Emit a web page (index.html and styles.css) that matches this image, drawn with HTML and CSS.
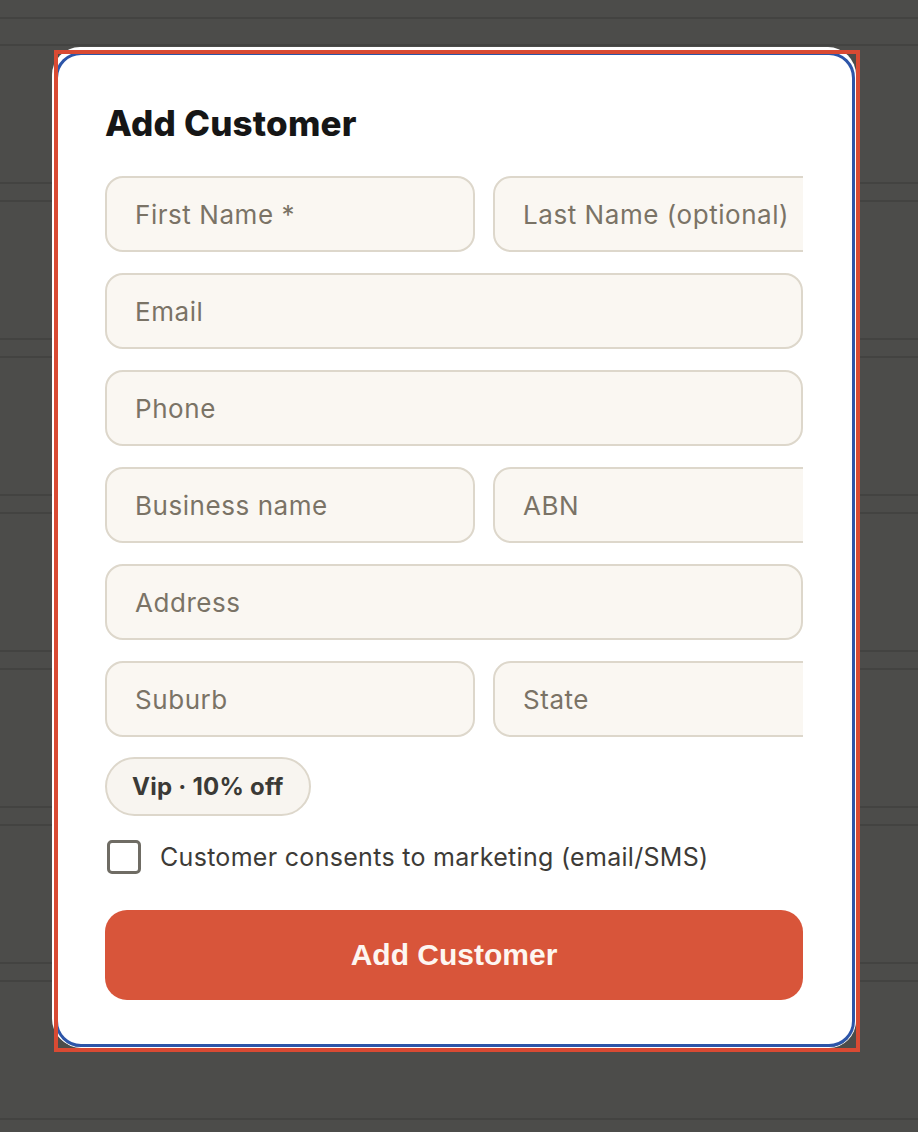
FILE: index.html
```html
<!DOCTYPE html>
<html lang="en">
<head>
<meta charset="utf-8">
<title>Add Customer</title>
<link rel="stylesheet" href="styles.css">
</head>
<body>
<div class="backdrop">
  <div class="bg-row top-a"></div>
  <div class="bg-row top-b"></div>
  <div class="bg-row tall"></div>
  <div class="bg-row band"></div>
  <div class="bg-row tall"></div>
  <div class="bg-row band"></div>
  <div class="bg-row tall"></div>
  <div class="bg-row band"></div>
  <div class="bg-row tall"></div>
  <div class="bg-row band"></div>
  <div class="bg-row tall"></div>
  <div class="bg-row band"></div>
  <div class="bg-row tall"></div>
  <div class="bg-row band"></div>
  <div class="bg-row tall"></div>
</div>

<div class="modal">
  <h1 class="title">Add Customer</h1>
  <form class="form">
    <div class="pair">
      <input class="field half" type="text" placeholder="First Name *">
      <input class="field half" type="text" placeholder="Last Name (optional)">
    </div>
    <input class="field" type="email" placeholder="Email">
    <input class="field" type="tel" placeholder="Phone">
    <div class="pair">
      <input class="field half" type="text" placeholder="Business name">
      <input class="field half" type="text" placeholder="ABN">
    </div>
    <input class="field" type="text" placeholder="Address">
    <div class="pair">
      <input class="field half" type="text" placeholder="Suburb">
      <input class="field half" type="text" placeholder="State">
    </div>
    <div class="pill-row">
      <span class="pill">Vip · 10% off</span>
    </div>
    <label class="consent">
      <input class="check" type="checkbox">
      <span>Customer consents to marketing (email/SMS)</span>
    </label>
    <button class="submit" type="button">Add Customer</button>
  </form>
</div>

<div class="ring-blue"></div>
<div class="ring-red"></div>
</body>
</html>
```

FILE: styles.css
```css
* { box-sizing: border-box; }

html, body {
  margin: 0;
  padding: 0;
  background: #4c4c4a;
  width: 918px;
  height: 1132px;
  overflow: hidden;
  font-family: "Inter", "Liberation Sans", sans-serif;
}

.backdrop {
  display: flex;
  flex-direction: column;
}

.bg-row {
  border-bottom: 2px solid #434341;
}
.top-a { height: 19px; }
.top-b { height: 27px; }
.tall { height: 138px; }
.band { height: 18px; }

.modal {
  position: absolute;
  left: 52px;
  top: 47px;
  width: 804px;
  height: 1000px;
  background: #ffffff;
  border-radius: 28px;
  padding: 55px 53px 48px 53px;
  display: flex;
  flex-direction: column;
}

.title {
  margin: 0;
  font-family: "Inter", "Liberation Sans", sans-serif;
  font-weight: 800;
  font-size: 35px;
  line-height: 42px;
  letter-spacing: 0.2px;
  color: #161616;
}

.form {
  margin-top: 32px;
  display: flex;
  flex-direction: column;
  gap: 21px;
}

.pair {
  display: flex;
  gap: 18px;
  overflow: hidden;
  width: 698px;
}

.field {
  display: block;
  width: 698px;
  height: 76px;
  margin: 0;
  padding: 0 28px;
  background: #faf7f2;
  border: 2px solid #ddd7cb;
  border-radius: 18px;
  font-family: "Inter", "Liberation Sans", sans-serif;
  font-size: 26px;
  letter-spacing: 0.55px;
  color: #3a3833;
  outline: none;
}
.field.half {
  flex: 0 0 370px;
  width: 370px;
}
.field::placeholder {
  color: #7a7366;
  opacity: 1;
}

.pill-row {
  display: flex;
  margin-top: -1px;
}

.pill {
  display: inline-flex;
  align-items: center;
  height: 59px;
  padding: 0 25px;
  border: 2px solid #ddd7cb;
  border-radius: 30px;
  background: #f8f5f0;
  font-weight: 700;
  font-size: 24px;
  letter-spacing: 0.25px;
  color: #3b3a36;
}

.consent {
  display: flex;
  align-items: center;
  gap: 19px;
  margin-top: 3px;
  padding-left: 2px;
  font-size: 25px;
  letter-spacing: 0.3px;
  color: #3d3b37;
}

.check {
  appearance: none;
  -webkit-appearance: none;
  margin: 0;
  width: 34px;
  height: 34px;
  border: 3px solid #6f6c64;
  border-radius: 5px;
  background: #ffffff;
  flex: 0 0 auto;
}

.submit {
  margin-top: 15px;
  width: 698px;
  height: 90px;
  border: none;
  border-radius: 22px;
  background: #d8553a;
  color: #fdf6f1;
  font-family: "Liberation Sans", Arial, sans-serif;
  font-weight: 700;
  font-size: 30px;
  cursor: pointer;
}

.ring-blue {
  position: absolute;
  left: 55px;
  top: 52px;
  width: 800px;
  height: 995px;
  border: 3px solid #2d55a8;
  border-radius: 26px;
  box-shadow: 0 0 0 1px #ffffff;
  pointer-events: none;
}

.ring-red {
  position: absolute;
  left: 54px;
  top: 50px;
  width: 806px;
  height: 1002px;
  border: 4px solid #d94a33;
  pointer-events: none;
}
```
